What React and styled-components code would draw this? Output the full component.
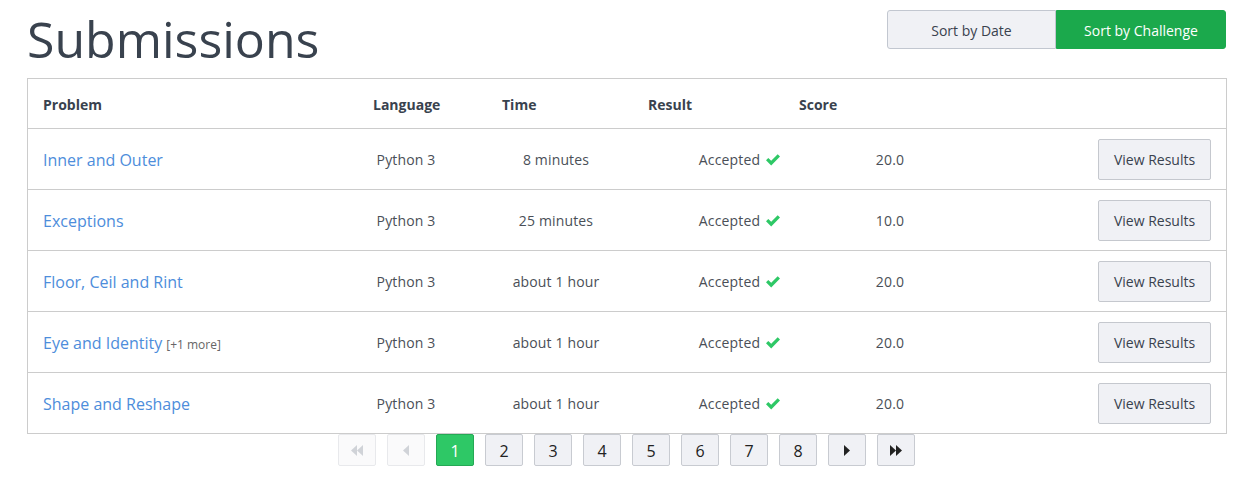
import * as React from "react"
import styled, { createGlobalStyle } from "styled-components"

const GlobalStyle = createGlobalStyle`
  body {
    margin: 0;
    background: #fff;
    font-family: "Open Sans", "Liberation Sans", sans-serif;
    color: #39424e;
  }
`

const Page = styled.div`
  width: 1200px;
  margin-left: 27px;
`

const TopBar = styled.div`
  display: flex;
  align-items: flex-start;
  justify-content: space-between;
  padding-top: 9px;
  margin-bottom: 9px;
`

const Title = styled.h1`
  margin: 0;
  font-size: 50px;
  line-height: 60px;
  font-weight: 400;
  color: #39424e;
`

const SortGroup = styled.div`
  display: flex;
  margin-top: 1px;
  margin-right: 1px;
`

const SortButton = styled.button`
  width: ${(p) => p.$width}px;
  height: 39px;
  padding: 2px 0 0;
  font-family: inherit;
  font-size: 14px;
  border: 1px solid ${(p) => (p.$active ? "#1ba94c" : "#c2c7d0")};
  background: ${(p) => (p.$active ? "#1ba94c" : "#f0f1f5")};
  color: ${(p) => (p.$active ? "#fff" : "#39424e")};
  border-radius: ${(p) => (p.$first ? "3px 0 0 3px" : "0 3px 3px 0")};
`

const Table = styled.div`
  border: 1px solid #ccc;
`

const HeaderRow = styled.div`
  display: grid;
  grid-template-columns: 330px 129px 146px 151px 1fr;
  height: 50px;
  padding-top: 2px;
  box-sizing: border-box;
  align-items: center;
  border-bottom: 1px solid #ccc;
`

const HeadCell = styled.div`
  padding-left: 15px;
  font-size: 14px;
  font-weight: 700;
  color: #39424e;
`

const Row = styled.div`
  display: grid;
  grid-template-columns: 318px 120px 180px 188px 112px 1fr;
  height: 60px;
  align-items: center;
  border-bottom: ${(p) => (p.$last ? "none" : "1px solid #ccc")};
`

const ProblemCell = styled.div`
  padding: 2px 0 0 15px;
  white-space: nowrap;
`

const ProblemLink = styled.a`
  font-size: 16px;
  color: #4d8ddb;
  text-decoration: none;
`

const More = styled.span`
  font-size: 12px;
  color: #666;
  margin-left: 4px;
`

const Cell = styled.div`
  font-size: 14px;
  letter-spacing: 0.15px;
  color: #4a4f57;
  display: flex;
  justify-content: center;
  align-items: center;
  gap: 5px;
`

const ActionCell = styled.div`
  display: flex;
  justify-content: flex-end;
  padding-right: 15px;
`

const ViewButton = styled.button`
  width: 113px;
  height: 41px;
  padding: 1px 0 0;
  font-family: inherit;
  font-size: 14px;
  color: #39424e;
  background: #f0f1f5;
  border: 1px solid #c5c8ce;
  border-radius: 2px;
`

const Pager = styled.div`
  display: flex;
  justify-content: center;
  gap: 11px;
  margin-left: -1px;
`

const PageButton = styled.button`
  width: 38px;
  height: 32px;
  padding: 1px 0 0;
  font-family: inherit;
  font-size: 16px;
  border-radius: 2px;
  display: flex;
  align-items: center;
  justify-content: center;
  border: 1px solid
    ${(p) => (p.$active ? "#25a855" : p.$disabled ? "#e8e9ec" : "#c8cbd1")};
  background: ${(p) => (p.$active ? "#2ec866" : p.$disabled ? "#fafafb" : "#f0f1f5")};
  color: ${(p) => (p.$active ? "#fff" : p.$disabled ? "#d0d3d8" : "#222")};
`

const Check = () => (
  <svg width="16" height="13" viewBox="0 0 16 13">
    <path d="M1 7.2 L3.3 4.9 L6.2 7.8 L12.7 1.3 L15 3.6 L6.2 12.4 Z" fill="#2ec866" />
  </svg>
)

const Arrows = ({ dir, count }) => (
  <svg width={count * 6} height="11" viewBox={`0 0 ${count * 6} 11`}>
    {Array.from({ length: count }).map((_, i) =>
      dir === "left" ? (
        <path key={i} d={`M${i * 6 + 6} 0 L${i * 6} 5.5 L${i * 6 + 6} 11 Z`} fill="currentColor" />
      ) : (
        <path key={i} d={`M${i * 6} 0 L${i * 6 + 6} 5.5 L${i * 6} 11 Z`} fill="currentColor" />
      )
    )}
  </svg>
)

const submissions = [
  { name: "Inner and Outer", time: "8 minutes", score: "20.0" },
  { name: "Exceptions", time: "25 minutes", score: "10.0" },
  { name: "Floor, Ceil and Rint", time: "about 1 hour", score: "20.0" },
  { name: "Eye and Identity", more: "[+1 more]", time: "about 1 hour", score: "20.0" },
  { name: "Shape and Reshape", time: "about 1 hour", score: "20.0" },
]

const App = () => (
  <>
    <GlobalStyle />
    <Page>
      <TopBar>
        <Title>Submissions</Title>
        <SortGroup>
          <SortButton $first $width={169}>Sort by Date</SortButton>
          <SortButton $active $width={170}>Sort by Challenge</SortButton>
        </SortGroup>
      </TopBar>

      <Table>
        <HeaderRow>
          <HeadCell>Problem</HeadCell>
          <HeadCell>Language</HeadCell>
          <HeadCell>Time</HeadCell>
          <HeadCell>Result</HeadCell>
          <HeadCell>Score</HeadCell>
        </HeaderRow>
        {submissions.map((s, i) => (
          <Row key={s.name} $last={i === submissions.length - 1}>
            <ProblemCell>
              <ProblemLink href="#">{s.name}</ProblemLink>
              {s.more && <More>{s.more}</More>}
            </ProblemCell>
            <Cell>Python 3</Cell>
            <Cell>{s.time}</Cell>
            <Cell>
              Accepted <Check />
            </Cell>
            <Cell>{s.score}</Cell>
            <ActionCell>
              <ViewButton>View Results</ViewButton>
            </ActionCell>
          </Row>
        ))}
      </Table>

      {/* Pagination */}
      <Pager>
        <PageButton $disabled><Arrows dir="left" count={2} /></PageButton>
        <PageButton $disabled><Arrows dir="left" count={1} /></PageButton>
        {[1, 2, 3, 4, 5, 6, 7, 8].map((n) => (
          <PageButton key={n} $active={n === 1}>{n}</PageButton>
        ))}
        <PageButton><Arrows dir="right" count={1} /></PageButton>
        <PageButton><Arrows dir="right" count={2} /></PageButton>
      </Pager>
    </Page>
  </>
)

export default App
